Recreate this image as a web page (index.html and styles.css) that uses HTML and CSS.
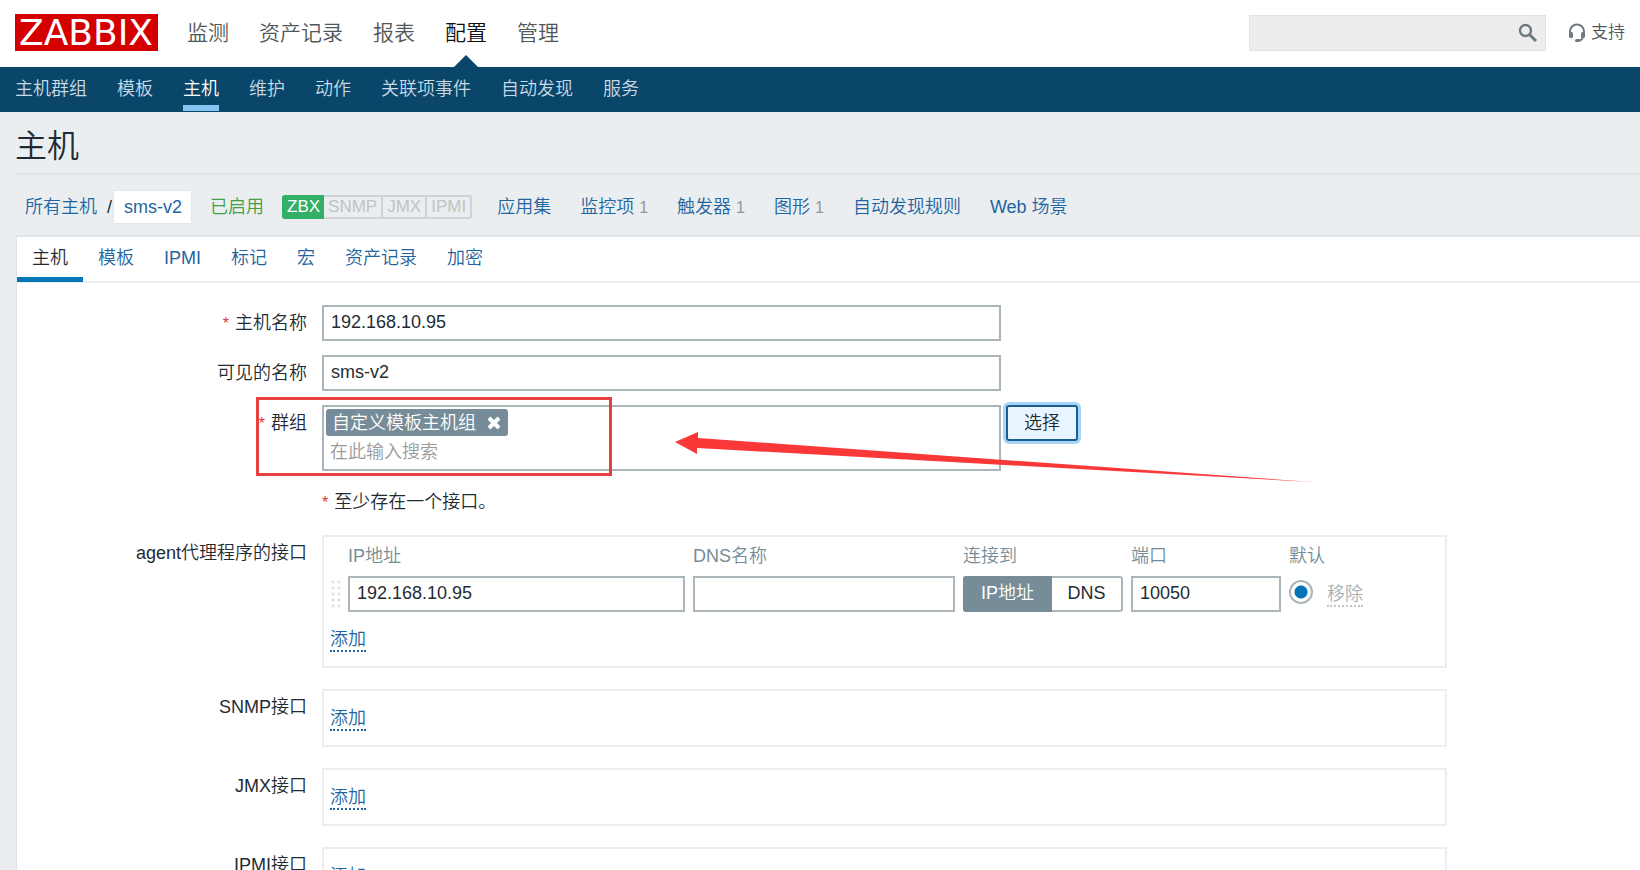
FILE: index.html
```html
<!DOCTYPE html>
<html lang="zh-CN">
<head>
<meta charset="utf-8">
<title>主机</title>
<link rel="stylesheet" href="styles.css">
</head>
<body>
<header class="top">
  <a class="logo" href="#">ZABBIX</a>
  <nav class="main-nav">
    <a href="#">监测</a>
    <a href="#">资产记录</a>
    <a href="#">报表</a>
    <a class="active" href="#">配置</a>
    <a href="#">管理</a>
  </nav>
  <form class="search">
    <input type="text" aria-label="搜索">
    <button type="button" aria-label="搜索">
      <svg width="20" height="20" viewBox="0 0 20 20" fill="none" stroke="#6c7a83"><circle cx="7.5" cy="7.5" r="5.5" stroke-width="2.4"/><path d="M11.5 11.5l6.5 6.5" stroke-width="3"/></svg>
    </button>
  </form>
  <a class="support" href="#">
    <svg width="18" height="20" viewBox="0 0 18 20"><path d="M2 11V8.500a7 7 0 0 1 14 0V11M15 13c0 3-2 4.500-5 4.700" fill="none" stroke="#6c7a83" stroke-width="2"/><rect x="1" y="9" width="4" height="6" rx="1.500" fill="#6c7a83"/><rect x="13" y="9" width="4" height="6" rx="1.500" fill="#6c7a83"/><rect x="7" y="16" width="5" height="3" rx="1.500" fill="#6c7a83"/></svg>
    <span>支持</span>
  </a>
</header>
<nav class="sub-nav">
  <a href="#">主机群组</a>
  <a href="#">模板</a>
  <a class="active" href="#">主机</a>
  <a href="#">维护</a>
  <a href="#">动作</a>
  <a href="#">关联项事件</a>
  <a href="#">自动发现</a>
  <a href="#">服务</a>
</nav>
<main class="page">
  <h1>主机</h1>
  <div class="crumbs">
    <div class="path"><a href="#">所有主机</a><span class="slash">/</span><a class="current" href="#">sms-v2</a></div>
    <span class="enabled">已启用</span>
    <div class="badges"><span class="on">ZBX</span><span>SNMP</span><span>JMX</span><span>IPMI</span></div>
    <a href="#">应用集</a>
    <span><a href="#">监控项</a> <sup>1</sup></span>
    <span><a href="#">触发器</a> <sup>1</sup></span>
    <span><a href="#">图形</a> <sup>1</sup></span>
    <a href="#">自动发现规则</a>
    <a href="#">Web 场景</a>
  </div>
  <section class="panel">
    <nav class="tabs">
      <a class="active" href="#">主机</a>
      <a href="#">模板</a>
      <a href="#">IPMI</a>
      <a href="#">标记</a>
      <a href="#">宏</a>
      <a href="#">资产记录</a>
      <a href="#">加密</a>
    </nav>
    <form class="form">
      <label class="label required" for="host">主机名称</label>
      <input class="text wide" id="host" type="text" value="192.168.10.95">

      <label class="label" for="visible">可见的名称</label>
      <input class="text wide" id="visible" type="text" value="sms-v2">

      <label class="label required" for="groups">群组</label>
      <div class="group-row">
        <div class="multi">
          <span class="chip">自定义模板主机组
            <button type="button" aria-label="移除群组"><svg width="14" height="14" viewBox="0 0 14 14"><path d="M2 2l10 10M12 2L2 12" stroke="#fff" stroke-width="4"/></svg></button>
          </span>
          <input id="groups" type="text" placeholder="在此输入搜索">
        </div>
        <button class="select" type="button">选择</button>
      </div>

      <p class="note required">至少存在一个接口。</p>

      <span class="label">agent代理程序的接口</span>
      <div class="box agent">
        <table>
          <thead>
            <tr><th class="c-drag"></th><th class="c-ip">IP地址</th><th class="c-dns">DNS名称</th><th class="c-conn">连接到</th><th class="c-port">端口</th><th class="c-def">默认</th><th></th></tr>
          </thead>
          <tbody>
            <tr>
              <td><span class="drag"></span></td>
              <td><input class="text" type="text" value="192.168.10.95" aria-label="IP地址"></td>
              <td><input class="text" type="text" aria-label="DNS名称"></td>
              <td><div class="segment"><button class="on" type="button">IP地址</button><button type="button">DNS</button></div></td>
              <td><input class="text" type="text" value="10050" aria-label="端口"></td>
              <td><input class="radio" type="radio" checked aria-label="默认"></td>
              <td><button class="link off" type="button">移除</button></td>
            </tr>
          </tbody>
        </table>
        <button class="link" type="button">添加</button>
      </div>

      <span class="label">SNMP接口</span>
      <div class="box"><button class="link" type="button">添加</button></div>

      <span class="label">JMX接口</span>
      <div class="box"><button class="link" type="button">添加</button></div>

      <span class="label">IPMI接口</span>
      <div class="box"><button class="link" type="button">添加</button></div>

      <div class="mark"></div>
      <svg class="arrow" width="640" height="53" viewBox="0 0 640 53"><path d="M0 12L23 2V8L638 52L22 18V24Z" fill="#fb3838"/></svg>
    </form>
  </section>
</main>
</body>
</html>
```
FILE: styles.css
```css
* {
  box-sizing: border-box;
}

body {
  margin: 0;
  background: #ebeef0;
  color: #1f2c33;
  font: 350 18px/24px "Liberation Sans", "Noto Sans CJK SC", sans-serif;
}

a {
  color: #1f65a0;
  text-decoration: none;
}

button,
input {
  margin: 0;
  padding: 0;
  border: 0;
  background: none;
  color: inherit;
  font: inherit;
}

.top {
  display: flex;
  align-items: center;
  height: 67px;
  padding: 0 15px 2px;
  background: #fff;
}

.logo {
  height: 37px;
  padding: 0 5px 0 4px;
  background: #d40000;
  color: #fff;
  font: 36px/37px "DejaVu Sans", sans-serif;
}

.main-nav {
  display: flex;
  gap: 30px;
  height: 67px;
  margin: 0 0 -2px 29px;
  font-size: 21px;
  line-height: 65px;
}

.main-nav a {
  position: relative;
  color: #50565a;
}

.main-nav .active {
  color: #111;
}

.main-nav .active::after {
  content: "";
  position: absolute;
  bottom: 0;
  left: 50%;
  margin-left: -12px;
  border: 12px solid transparent;
  border-top: 0;
  border-bottom-color: #0a466a;
}

.search {
  display: flex;
  align-items: center;
  width: 297px;
  height: 36px;
  margin-left: auto;
  padding-right: 7px;
  border: 1px solid #dfe2e3;
  background: #ededed;
}

.search input {
  flex: 1;
  min-width: 0;
}

.search button {
  display: flex;
}

.support {
  display: flex;
  align-items: center;
  gap: 5px;
  margin-left: 22px;
  color: #50565a;
  font-size: 17px;
}

.sub-nav {
  display: flex;
  gap: 30px;
  height: 45px;
  padding: 0 15px;
  background: #0a466a;
  line-height: 44px;
}

.sub-nav a {
  height: 44px;
  color: #c8dae6;
}

.sub-nav .active {
  border-bottom: 6px solid #84c5f2;
  color: #fff;
}

.page {
  padding-left: 15px;
}

h1 {
  margin: 0;
  padding: 14px 0 7px;
  border-bottom: 2px solid #dfe4e7;
  font-size: 32px;
  font-weight: 350;
  line-height: 40px;
}

.crumbs {
  display: flex;
  align-items: center;
  gap: 29px;
  height: 60px;
  padding: 4px 0 0 10px;
}

.path {
  display: flex;
  align-items: center;
  margin-right: -10px;
}

.slash {
  margin: 0 2px 0 10px;
}

.current {
  padding: 4px 9px 4px 10px;
  background: #fff;
  box-shadow: 0 0 2px #d5dade;
}

.enabled {
  color: #429e47;
}

.badges {
  display: flex;
  margin: 0 -4px 0 -11px;
  border: 2px solid #d0d3d5;
  border-left: 0;
  border-radius: 3px;
  color: #bfc3c5;
  font-size: 17px;
  line-height: 20px;
}

.badges span {
  padding: 0 4px;
}

.badges span + span + span {
  border-left: 2px solid #d0d3d5;
}

.badges .on {
  margin: -2px 0;
  padding: 2px 4px 2px 5px;
  border-radius: 3px 0 0 3px;
  background: #34af67;
  color: #fff;
}

sup {
  color: #8b969d;
  font-size: 16px;
  line-height: 24px;
  vertical-align: baseline;
}

.panel {
  margin-left: 1px;
  border-top: 2px solid #dfe4e7;
  border-left: 1px solid #dfe4e7;
  background: #fff;
}

.tabs {
  display: flex;
  height: 46px;
  border-bottom: 2px solid #ebeef0;
  line-height: 43px;
}

.tabs a {
  height: 45px;
  padding: 0 15px;
}

.tabs .active {
  border-bottom: 5px solid #0275b8;
  color: #1f2c33;
}

.form {
  position: relative;
  display: grid;
  grid-template-columns: 290px minmax(0, 1125px);
  column-gap: 15px;
  padding: 22px 16px 40px 0;
}

.label {
  padding-top: 6px;
  text-align: right;
}

.required::before {
  content: "*";
  margin-right: 6px;
  color: #e33734;
  font-size: 16px;
}

.text {
  width: 100%;
  height: 36px;
  padding: 0 8px 2px 7px;
  border: 2px solid #acb5b9;
  background: #fff;
}

.wide {
  max-width: 679px;
  margin-bottom: 14px;
}

.group-row {
  display: flex;
  align-items: flex-start;
  gap: 5px;
}

.multi {
  flex: 0 1 679px;
  height: 66px;
  padding: 2px;
  border: 2px solid #acb5b9;
}

.chip {
  display: flex;
  align-items: center;
  gap: 11px;
  width: max-content;
  height: 27px;
  padding: 0 7px 0 6px;
  border-radius: 3px;
  background: #768d99;
  color: #fff;
}

.chip button,
.chip svg {
  display: block;
}

.multi input {
  display: block;
  width: 100%;
  height: 32px;
  padding-left: 4px;
}

.multi input::placeholder {
  color: #9b9b9b;
  opacity: 1;
}

.select {
  width: 72px;
  height: 36px;
  border: 2px solid #1b5f8f;
  border-radius: 3px;
  background: #e8f4ff;
  box-shadow: 0 0 0 3px #a6d5f7;
}

.note {
  grid-column: 2;
  margin: 19px 0 20px;
}

.box {
  min-height: 58px;
  margin-bottom: 21px;
  padding: 15px 6px 0;
  border: 2px solid #ebeef0;
}

.agent {
  height: 133px;
  padding-top: 5px;
}

table {
  margin-bottom: 15px;
  border-collapse: collapse;
  table-layout: fixed;
}

th {
  height: 34px;
  padding: 2px 0 8px;
  color: #768d99;
  font-weight: 350;
  text-align: left;
}

td {
  height: 36px;
  padding: 0 8px 0 0;
}

.c-drag { width: 17px; }
.c-ip { width: 345px; }
.c-dns { width: 270px; }
.c-conn { width: 168px; }
.c-port { width: 158px; }
.c-def { width: 38px; }

.drag {
  display: block;
  width: 10px;
  height: 30px;
  background: radial-gradient(circle, #dde1e3 1px, transparent 2px) 0 0 / 6px 6px;
}

.segment {
  display: flex;
  height: 36px;
  border: 2px solid #acb5b9;
  border-radius: 3px;
}

.segment button {
  flex: 1;
  padding-bottom: 2px;
}

.segment .on {
  flex: 0 0 89px;
  margin: -2px 0 -2px -2px;
  border-radius: 3px 0 0 3px;
  background: #768d99;
  color: #fff;
}

.radio {
  display: block;
  width: 24px;
  height: 24px;
  margin-bottom: 4px;
  appearance: none;
  border: 2px solid #acb5b9;
  border-radius: 50%;
  background: radial-gradient(circle, #0275b8 6px, #fff 7px);
}

.link {
  border-bottom: 2px dotted #1f65a0;
  color: #1f65a0;
  line-height: 22px;
}

.off {
  border-color: #c0c6c9;
  color: #a5b0b5;
}

.mark {
  position: absolute;
  top: 114px;
  left: 239px;
  width: 356px;
  height: 79px;
  border: 3px solid #e84040;
}

.arrow {
  position: absolute;
  top: 147px;
  left: 658px;
}
```
